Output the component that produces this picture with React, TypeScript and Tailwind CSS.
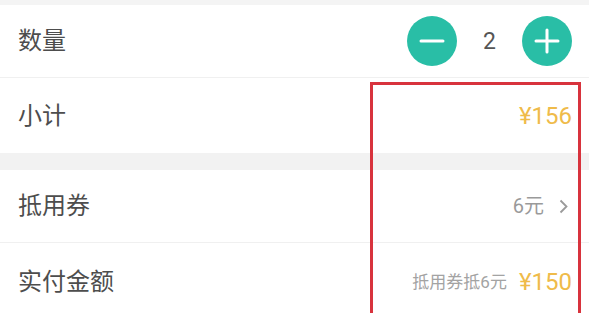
import React from 'react';

const font = "font-['Roboto','Noto_Sans_CJK_SC',sans-serif]";

function Row({
  label,
  children,
  className = '',
}: {
  label: string;
  children?: React.ReactNode;
  className?: string;
}) {
  return (
    <div className={`flex items-center justify-between bg-white pl-[18px] pr-[17px] ${className}`}>
      <span className="text-[24px] leading-none text-[#4d4d4d]">{label}</span>
      <div className="flex items-center">{children}</div>
    </div>
  );
}

function RoundButton({ plus }: { plus?: boolean }) {
  return (
    <button className="flex h-[50px] w-[50px] items-center justify-center rounded-full bg-[#29bea6]">
      <svg width="26" height="26" viewBox="0 0 26 26" fill="none">
        <path d="M2 13h22" stroke="white" strokeWidth="3" strokeLinecap="round" />
        {plus && <path d="M13 2v22" stroke="white" strokeWidth="3" strokeLinecap="round" />}
      </svg>
    </button>
  );
}

export default function App() {
  return (
    <div className={`relative h-[313px] w-[589px] overflow-hidden bg-white ${font}`}>
      <div className="h-[5px] bg-[#f4f4f4]" />
      <Row label="数量" className="h-[73px] border-b border-[#f0f0f0]">
        <div className="flex items-center gap-[26px]">
          <RoundButton />
          <span className="text-[23px] leading-none text-[#555]">2</span>
          <RoundButton plus />
        </div>
      </Row>
      <Row label="小计" className="h-[75px]">
        <span className="text-[24px] leading-none text-[#efbb4a]">¥156</span>
      </Row>
      <div className="h-[17px] bg-[#f2f2f2]" />
      <Row label="抵用券" className="h-[73px] border-b border-[#f0f0f0]">
        <span className="text-[20px] leading-none text-[#9a9a9a]">6元</span>
        <svg className="ml-[15px] mr-[4px]" width="9" height="15" viewBox="0 0 9 15" fill="none">
          <path d="M1.5 1.5l6 6-6 6" stroke="#9a9a9a" strokeWidth="1.8" />
        </svg>
      </Row>
      <Row label="实付金额" className="h-[78px]">
        <span className="mr-[12px] text-[17px] leading-none text-[#a3a3a3]">抵用券抵6元</span>
        <span className="text-[24px] leading-none text-[#efbb4a]">¥150</span>
      </Row>
      <div className="pointer-events-none absolute left-[370px] top-[82px] h-[260px] w-[211px] border-[3px] border-[#d8333d]" />
    </div>
  );
}
